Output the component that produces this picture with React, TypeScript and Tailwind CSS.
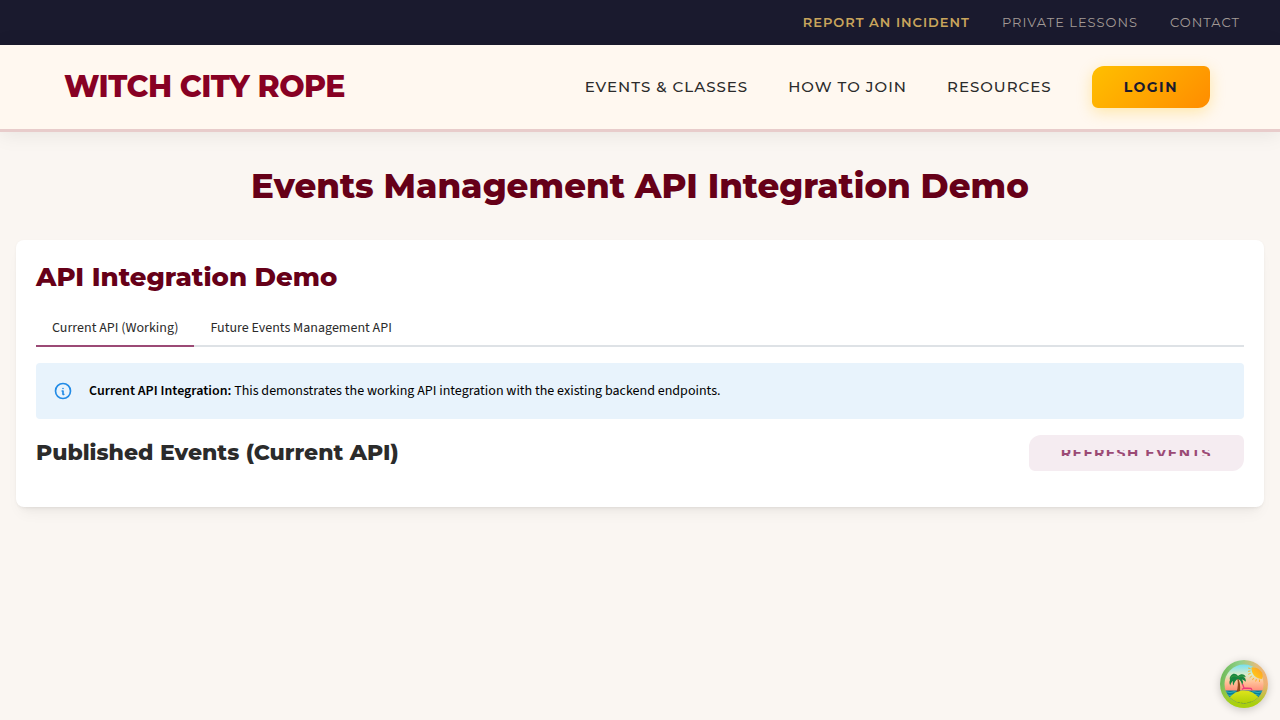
import React, { useState } from "react";

const utilityLinks = [
  { label: "Report an Incident", className: "font-semibold text-[#c9a55c]" },
  { label: "Private Lessons", className: "text-[#a39a96]" },
  { label: "Contact", className: "text-[#a39a96]" },
];

const navLinks = ["Events & Classes", "How to Join", "Resources"];
const tabs = ["Current API (Working)", "Future Events Management API"];

function InfoIcon() {
  return (
    <svg
      viewBox="0 0 24 24"
      className="size-5 shrink-0 text-[#228be6]"
      fill="none"
      stroke="currentColor"
      strokeWidth="2"
      strokeLinecap="round"
      strokeLinejoin="round"
      aria-hidden="true"
    >
      <path d="M3 12a9 9 0 1 0 18 0a9 9 0 0 0 -18 0" />
      <path d="M12 9h.01" />
      <path d="M11 12h1v4h1" />
    </svg>
  );
}

function IslandLogo() {
  return (
    <svg viewBox="0 0 48 48" className="size-12" aria-hidden="true">
      <defs>
        <linearGradient id="rim" x1="0" y1="0.4" x2="1" y2="0.55">
          <stop offset="0" stopColor="#6fba55" />
          <stop offset="0.35" stopColor="#8fd08a" />
          <stop offset="0.7" stopColor="#e0bd7c" />
          <stop offset="1" stopColor="#f3ae72" />
        </linearGradient>
        <linearGradient id="rimLow" x1="0" y1="0" x2="0" y2="1">
          <stop offset="0.5" stopColor="#9cc832" stopOpacity="0" />
          <stop offset="0.9" stopColor="#a9d00e" />
        </linearGradient>
        <linearGradient id="sky" x1="0" y1="0" x2="0" y2="1">
          <stop offset="0.08" stopColor="#70dff2" />
          <stop offset="0.3" stopColor="#d8eccb" />
          <stop offset="0.45" stopColor="#ffc49a" />
          <stop offset="0.7" stopColor="#ff8070" />
        </linearGradient>
        <linearGradient id="sand" x1="0" y1="0" x2="0" y2="1">
          <stop offset="0" stopColor="#dfe41b" />
          <stop offset="1" stopColor="#9ec900" />
        </linearGradient>
        <linearGradient id="sun" x1="0" y1="1" x2="1" y2="0">
          <stop offset="0" stopColor="#ffd51b" />
          <stop offset="1" stopColor="#ff9a22" />
        </linearGradient>
        <clipPath id="scene">
          <circle cx="24" cy="24" r="19.5" />
        </clipPath>
      </defs>
      <circle cx="24" cy="24" r="24" fill="url(#rim)" />
      <circle cx="24" cy="24" r="24" fill="url(#rimLow)" />
      <g clipPath="url(#scene)">
        <rect width="48" height="48" fill="url(#sky)" />
        <rect y="30.5" width="48" height="18" fill="#087f98" />
        <path
          d="M4 32.2q2-1 4 0t4 0 4 0M32 32.2q2-1 4 0t4 0 4 0M4 35q2-1 4 0t4 0M34 35q2-1 4 0t4 0"
          fill="none"
          stroke="#50d0d0"
          strokeWidth="0.6"
        />
        <path d="M7 41C12 33 18 30.5 24 30.5s13 3 17 10.500l-8 7H14z" fill="url(#sand)" />
        <path
          d="M12 41.500c4 2 6 .5 9 1.500s6 .5 8-.5 5 0 8-1.500"
          fill="none"
          stroke="#5fa316"
          strokeWidth="0.8"
          strokeDasharray="2 1"
        />
      </g>
      <path d="M31.500 7.500c4-1 8 1.500 10.500 5 1 2.500 .8 4.500 0 6.500-6 0-11-5-10.500-11.500z" fill="url(#sun)" />
      <path
        d="M30 11l-1.600.3M30.300 13.500l-1.800.7M31.500 16.200l-1.500 1.200M33.500 18.300l-.9 1.500M36.300 19.500l-.5 1.600M39.500 20v1.600M30.200 8.500l-1.700-.4"
        stroke="#ffab1b"
        strokeWidth="0.9"
        strokeLinecap="round"
      />
      <path
        d="M22.500 24l1.500 4 7 .3 1 2M22 29.500l2-1.500"
        fill="none"
        stroke="#ec3a78"
        strokeWidth="1.3"
        strokeLinejoin="round"
      />
      <path d="M17.500 17c2.500 4 3.100 9 2.500 14l-3.500 1c1.500-4 1.900-10 .5-14z" fill="#94491c" />
      <path
        d="M18 16c-2-2.500-5-3-7-.5-1.500 1.500-1.500 3-1 4.500-1 2-.5 4 .3 5.500 .5-2 1.200-3.500 2.700-4.500-.5 1.500-.3 3 .5 4.500 .5-3 2-5 4-6.500 2 .5 4 2 4.500 6 1.500-2 1.300-4-.2-5.500 1.500 .2 2.700 1 4 2.300 .3-2.500-.8-4.300-2.800-5 1 0 1.800 0 2.800.4-1-3-4.500-4-7.800-1.200z"
        fill="#16843f"
      />
      <path d="M17.500 17c-3-2-5-1-7 1M18.500 17c3-1.500 5-1 6.500 0" fill="none" stroke="#45a33d" strokeWidth="0.8" />
    </svg>
  );
}

export default function App() {
  const [active, setActive] = useState(0);

  return (
    <div className="min-h-screen bg-[#faf6f2] font-['Montserrat','Inter',sans-serif] text-[#2b2b2b]">
      <div className="flex h-[45px] items-center justify-end gap-8 bg-[#1a1a2e] px-10 text-[13px] uppercase tracking-[1px]">
        {utilityLinks.map((link) => (
          <a key={link.label} href="#" className={link.className}>
            {link.label}
          </a>
        ))}
      </div>

      <header className="relative flex items-center justify-between border-b-[3px] border-[#e8cccb] bg-[#fff8f0] py-[21px] pr-[70px] pl-16 shadow-[0_2px_20px_rgba(0,0,0,0.08)]">
        <a href="#" className="text-[30px] leading-9 font-extrabold tracking-[-0.5px] text-[#880124]">
          WITCH CITY ROPE
        </a>
        <nav className="flex items-center gap-10 text-[15px] uppercase tracking-[1px]">
          {navLinks.map((label) => (
            <a key={label} href="#" className="font-medium">
              {label}
            </a>
          ))}
          <a
            href="#"
            className="flex h-[42px] items-center rounded-[12px_6px_12px_6px] bg-linear-135 from-[#ffbf00] to-[#ff8c00] px-8 text-[14px] font-bold tracking-[1.5px] text-[#1a1a2e] shadow-[0_4px_15px_rgba(255,191,0,0.3)]"
          >
            Login
          </a>
        </nav>
      </header>

      <main className="px-4 pt-8 pb-24">
        <h1 className="text-center text-[34px] leading-[44px] font-extrabold text-[#660018]">
          Events Management API Integration Demo
        </h1>

        <section className="mt-8 rounded-lg bg-white px-5 pt-5 pb-9 shadow-[0_1px_3px_rgba(0,0,0,0.05),0_10px_15px_-5px_rgba(0,0,0,0.05),0_7px_7px_-5px_rgba(0,0,0,0.04)]">
          <h2 className="text-[26px] leading-[34px] font-extrabold text-[#660018]">API Integration Demo</h2>

          <div
            role="tablist"
            className="mt-4 flex border-b-2 border-[#dee2e6] font-['Source_Sans_3','Noto_Sans_CJK_SC',sans-serif] text-[14px] leading-5"
          >
            {tabs.map((label, i) => (
              <button
                key={label}
                type="button"
                role="tab"
                aria-selected={active === i}
                onClick={() => setActive(i)}
                className={`-mb-[2px] border-b-2 px-4 pt-2 pb-[7px] ${
                  active === i ? "border-[#9b4a75]" : "border-transparent"
                }`}
              >
                {label}
              </button>
            ))}
          </div>

          <div
            role="alert"
            className="mt-4 flex h-14 items-center gap-4 rounded bg-[#e8f3fc] px-[17px] font-['Source_Sans_3','Noto_Sans_CJK_SC',sans-serif] text-[14px] leading-5 text-black"
          >
            <InfoIcon />
            <p>
              <strong className="font-semibold">Current API Integration:</strong> This demonstrates the working API
              integration with the existing backend endpoints.
            </p>
          </div>

          <div className="mt-4 flex items-center justify-between">
            <h3 className="text-[22px] leading-[30px] font-extrabold">Published Events (Current API)</h3>
            <button
              type="button"
              className="flex h-9 items-center rounded-[12px_6px_12px_6px] bg-[#f5ecf1] px-8 text-[14px] font-bold uppercase tracking-[1.5px] text-[#9b4a75]"
            >
              <span className="flex h-[6px] items-center overflow-hidden leading-5">Refresh Events</span>
            </button>
          </div>
        </section>
      </main>

      <button
        type="button"
        aria-label="Open query devtools"
        className="fixed right-3 bottom-3 size-12 rounded-full shadow-[0_2px_8px_rgba(0,0,0,0.2)]"
      >
        <IslandLogo />
      </button>
    </div>
  );
}
